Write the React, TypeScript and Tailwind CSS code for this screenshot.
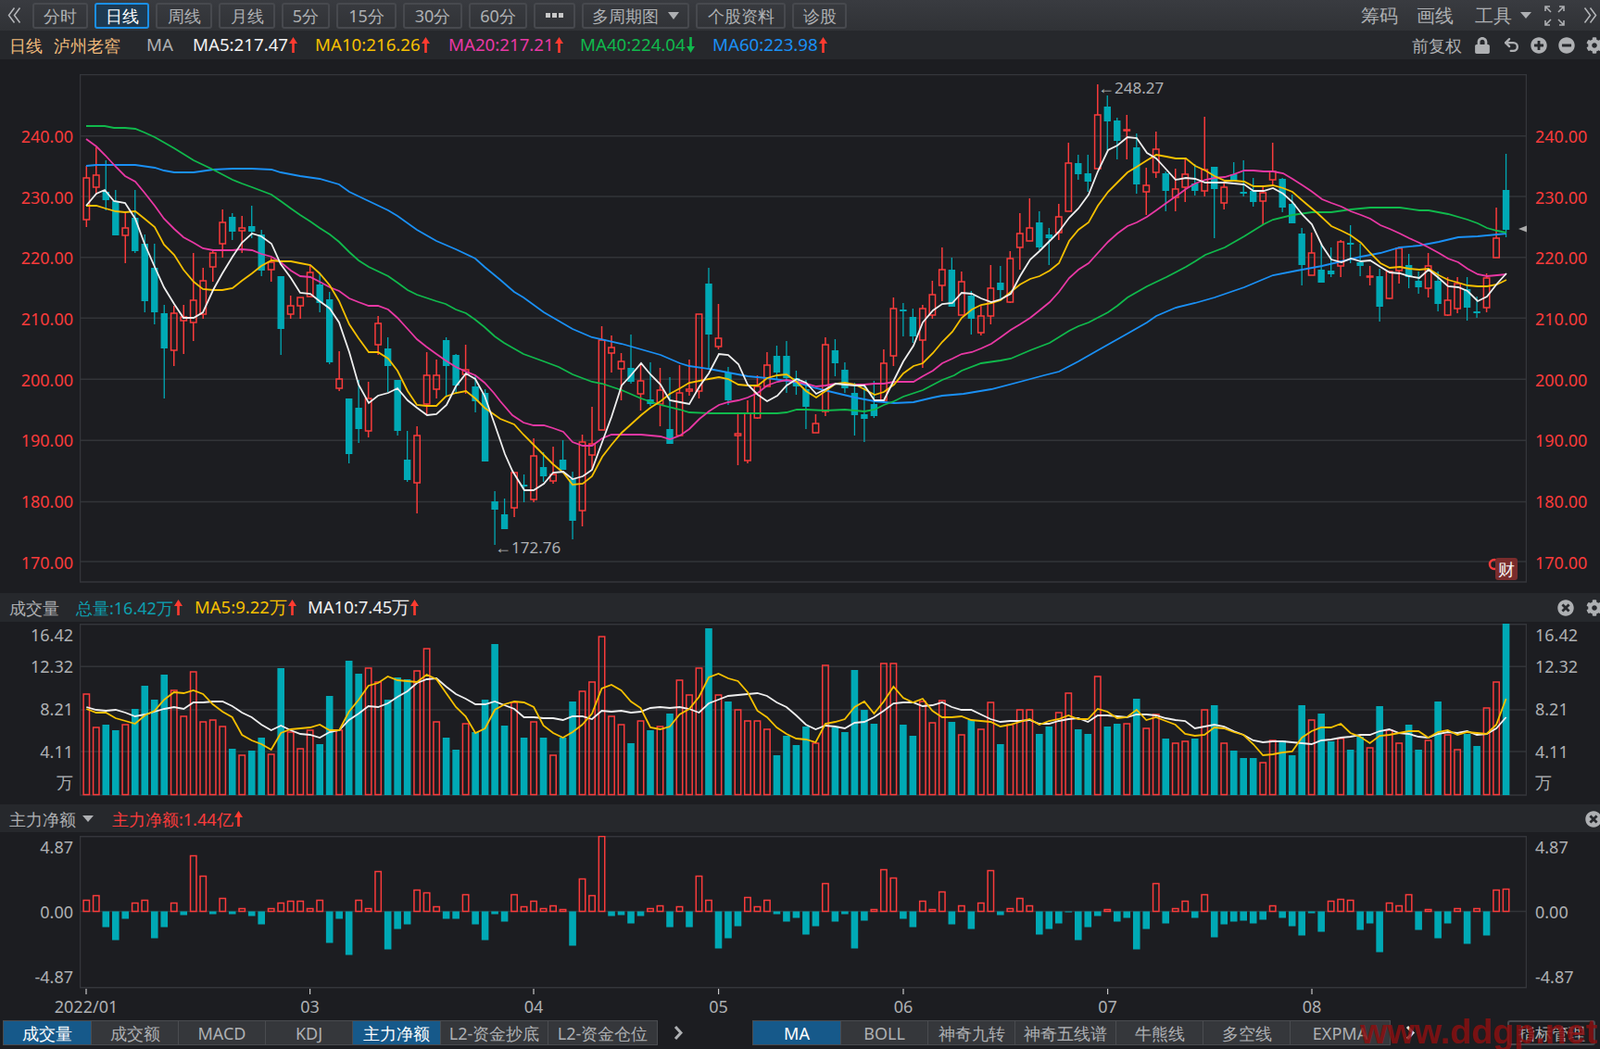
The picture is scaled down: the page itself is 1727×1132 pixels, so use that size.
import React from "react";
import { FaCog, FaLock, FaMinusCircle, FaPlusCircle, FaTimesCircle } from "react-icons/fa";
import { Undo2 } from "lucide-react";

const RED = "#f93b3b";
const TEAL = "#00a9b5";
const GRID = "#323438";
const STEP = 10.495;
const xAt = (i: number) => 93.3 + STEP * i;

// body top, body bottom, high, low, up
const candles: [number, number, number, number, number][] = [
  [192,237,179,245,1],[189,202,159,210,1],[207,216,173,227,0],[217,254,205,254,0],[246,254,230,284,1],
  [235,271,205,273,0],[263,325,253,337,0],[289,337,263,350,0],[338,376,329,430,0],[338,378,330,395,1],
  [342,346,329,382,1],[324,348,273,368,1],[303,339,289,344,1],[273,288,271,304,1],[240,263,226,278,1],
  [234,250,230,259,0],[246,249,233,273,1],[244,250,222,257,0],[253,292,248,298,0],[283,291,278,304,1],
  [298,355,298,383,0],[330,339,319,344,1],[321,330,321,344,1],[294,320,287,320,1],[307,327,295,337,0],
  [323,391,315,393,0],[409,419,379,422,1],[430,490,430,500,0],[440,463,410,478,0],[430,465,412,472,1],
  [349,372,341,383,1],[376,395,364,423,0],[410,465,410,470,0],[496,518,465,520,0],[470,521,460,554,1],
  [405,436,380,448,1],[405,420,388,430,1],[367,395,364,427,0],[383,416,382,425,0],[399,404,372,425,1],
  [417,433,405,445,0],[424,498,420,498,0],[541,550,530,588,0],[555,571,538,571,0],[510,548,510,558,1],
  [523,525,512,542,0],[492,539,473,542,1],[504,514,488,520,0],[512,519,482,522,1],[496,507,475,507,0],
  [517,562,509,582,0],[477,551,469,568,1],[479,491,439,507,1],[367,464,352,464,1],[375,381,362,402,1],
  [390,398,381,432,1],[397,412,361,414,0],[411,425,393,443,1],[431,436,391,438,0],[421,436,397,460,1],
  [463,479,407,479,0],[424,470,394,470,1],[420,422,388,427,1],[339,422,339,430,1],[306,361,289,398,0],
  [365,374,328,377,1],[402,432,396,437,0],[468,470,446,502,1],[446,497,432,500,1],[417,451,405,452,1],
  [394,417,380,417,1],[384,402,373,410,0],[384,408,368,424,0],[408,417,400,426,0],[420,439,410,463,0],
  [457,467,447,467,1],[372,444,364,449,1],[378,392,366,406,0],[399,419,391,424,0],[424,448,413,470,0],
  [447,452,417,477,0],[436,449,411,451,0],[392,432,377,435,1],[333,384,321,395,1],[334,336,327,363,0],
  [342,363,333,370,0],[333,367,329,397,1],[318,340,303,344,1],[291,308,267,325,1],[291,331,278,331,0],
  [304,340,293,340,1],[319,344,314,361,0],[341,359,330,362,1],[311,341,286,350,1],[305,313,287,322,0],
  [279,326,271,327,1],[252,267,230,291,1],[246,260,214,260,1],[240,267,228,270,0],[253,257,246,286,0],
  [234,251,220,259,1],[176,228,154,228,1],[176,188,167,194,0],[187,196,167,207,0],[124,182,91,182,1],
  [115,131,103,162,0],[130,152,127,172,0],[140,141,124,172,1],[159,199,144,209,0],[200,207,181,232,1],
  [161,186,142,192,1],[187,206,185,228,0],[204,213,182,228,1],[188,202,172,218,1],[198,206,177,211,0],
  [183,206,126,212,1],[180,204,180,257,0],[202,219,197,226,1],[188,195,175,195,0],[207,209,173,212,0],
  [206,218,192,223,0],[208,217,200,242,1],[185,194,154,200,1],[193,224,192,229,0],[220,241,210,241,0],
  [252,286,246,308,0],[273,297,251,297,1],[291,305,263,305,0],[292,296,267,299,0],[261,287,259,299,1],
  [262,264,243,284,0],[283,287,263,298,0],[298,299,287,308,1],[298,331,290,347,0],[293,322,292,323,1],
  [268,292,266,306,1],[286,299,274,311,0],[303,310,293,317,0],[287,311,273,321,1],[303,328,293,336,0],
  [324,340,299,341,1],[306,333,299,338,1],[312,332,299,346,0],[336,338,320,343,0],[300,332,295,337,1],
  [257,278,224,278,1],[205,248,166,256,0],
];

const ma5 = "93,222 104,209 113,205 123,217 135,219 146,236 156,263 167,288 177,310 188,328 198,343 209,343 219,337 230,313 240,295 251,277 261,262 272,252 282,255 293,263 303,285 314,300 324,316 335,317 345,325 356,333 366,348 377,380 387,415 398,435 408,427 419,424 429,419 440,432 450,440 461,448 471,447 482,437 492,417 503,403 513,409 523,427 534,458 545,490 553,508 566,529 576,529 587,522 597,510 608,509 618,517 629,514 639,507 650,477 660,450 671,416 681,405 692,392 702,404 713,415 723,432 734,434 744,436 755,417 765,403 776,382 786,383 797,393 807,415 818,426 828,433 839,427 849,416 860,409 870,413 881,425 891,420 902,414 912,415 923,416 933,416 944,432 954,432 965,410 975,390 986,373 996,348 1007,335 1017,328 1028,327 1038,316 1049,317 1059,322 1070,326 1080,323 1091,317 1101,298 1112,280 1122,271 1133,260 1143,250 1154,235 1164,225 1175,210 1185,185 1196,162 1206,157 1217,148 1227,149 1238,165 1248,171 1259,183 1269,194 1280,192 1290,193 1301,197 1311,197 1322,197 1332,198 1343,199 1353,206 1364,206 1374,203 1385,209 1395,218 1406,232 1416,242 1427,265 1437,280 1448,283 1458,279 1469,282 1479,281 1490,288 1500,294 1511,295 1521,298 1532,300 1542,291 1553,300 1563,309 1574,310 1584,314 1595,325 1605,320 1616,306 1626,295";
const ma10 = "93,222 104,222 114,225 125,228 135,229 146,228 156,236 167,245 177,264 188,275 198,291 209,304 219,312 230,313 240,313 251,311 261,303 272,295 282,287 293,281 303,282 314,282 324,284 335,286 345,295 356,308 366,325 377,350 387,365 398,380 408,380 419,387 429,400 440,422 450,437 460,438 471,438 481,428 492,424 503,422 513,430 523,440 540,452 555,458 565,469 576,480 587,491 597,501 608,510 618,523 629,522 639,514 650,493 660,480 671,467 681,458 692,448 702,440 713,433 723,425 734,419 744,413 755,411 765,409 776,407 786,409 797,415 807,416 818,416 828,408 839,405 849,404 860,412 870,422 881,429 891,422 902,414 912,413 923,415 933,420 944,426 954,423 965,415 975,403 986,395 996,392 1007,381 1017,369 1028,358 1038,343 1049,334 1059,329 1070,327 1080,324 1091,315 1101,307 1112,301 1122,298 1133,292 1143,284 1154,260 1164,248 1175,240 1185,222 1196,207 1206,197 1217,186 1227,180 1238,173 1248,167 1259,169 1269,171 1280,171 1290,179 1301,184 1311,190 1322,195 1332,195 1343,196 1353,201 1364,201 1374,200 1385,203 1395,207 1410,220 1422,230 1437,244 1448,249 1458,254 1469,262 1479,273 1490,284 1500,289 1511,288 1521,290 1532,291 1542,290 1553,297 1563,302 1574,305 1584,308 1595,309 1605,309 1616,307 1626,302";
const ma20 = "93,150 104,158 114,168 125,180 135,190 146,196 156,208 167,222 177,236 188,247 198,256 209,262 219,268 230,270 240,270 251,270 261,269 272,270 282,274 293,277 303,283 314,292 324,298 335,299 345,304 356,310 366,314 377,322 387,326 398,330 408,330 419,334 429,343 440,355 450,366 460,374 471,382 481,389 492,396 503,401 513,405 523,413 533,424 540,433 553,448 565,456 576,459 587,459 597,462 608,466 618,477 629,481 639,481 650,473 660,469 671,469 692,469 713,471 723,474 734,470 744,463 755,452 765,444 776,437 786,434 797,432 807,429 818,424 828,416 839,412 849,410 860,412 870,414 881,417 891,416 902,414 912,414 923,415 933,415 944,414 954,414 965,412 975,412 986,412 996,406 1007,400 1017,392 1028,387 1038,382 1049,380 1059,376 1070,371 1080,364 1091,356 1101,350 1112,343 1122,335 1133,326 1143,315 1154,300 1164,291 1175,284 1185,273 1196,261 1206,252 1217,244 1227,240 1238,234 1248,227 1259,219 1269,212 1280,204 1290,198 1301,194 1311,192 1322,191 1332,188 1343,184 1353,184 1364,185 1374,185 1385,187 1395,193 1406,200 1415,206 1427,215 1437,219 1448,223 1458,228 1469,232 1479,236 1490,243 1500,247 1511,252 1521,257 1532,262 1542,267 1553,273 1563,279 1574,283 1584,290 1595,296 1605,298 1616,297 1626,296";
const ma40 = "93,136 113,136 123,138 135,138 146,139 156,143 167,148 188,160 209,173 230,183 251,194 261,198 272,202 293,210 303,217 314,225 324,232 335,239 345,246 356,253 366,261 377,272 387,281 398,288 419,298 429,305 440,313 450,318 471,325 481,328 492,334 503,338 513,345 523,353 534,363 544,370 565,382 587,390 603,396 618,404 639,412 650,414 671,421 692,430 713,437 734,442 744,445 765,446 786,446 807,446 828,446 839,446 849,445 860,442 870,442 891,443 912,442 933,444 944,442 954,437 965,433 975,428 996,421 1017,410 1030,405 1038,400 1059,392 1080,389 1091,387 1112,378 1133,370 1154,357 1164,352 1175,348 1196,337 1206,330 1217,321 1238,309 1259,299 1280,288 1290,282 1301,275 1322,267 1343,255 1364,242 1374,237 1395,232 1416,229 1437,229 1458,226 1479,224 1511,224 1532,227 1542,227 1563,231 1584,237 1595,241 1605,246 1616,249 1626,251";
const ma60 = "93,179 104,178 125,178 146,178 167,181 177,184 188,186 209,186 230,183 251,182 272,182 293,183 303,186 324,190 345,193 366,199 377,207 398,217 419,227 429,233 450,248 471,260 492,269 513,279 523,288 540,302 555,315 565,321 587,337 618,355 639,364 671,371 692,377 713,383 734,392 744,395 765,398 786,402 807,406 828,408 849,411 860,413 881,419 902,424 923,429 944,433 965,435 986,434 1007,429 1017,427 1040,425 1070,420 1101,412 1127,405 1143,401 1164,390 1185,378 1217,360 1238,348 1248,341 1269,332 1290,327 1311,321 1343,310 1374,297 1400,292 1427,287 1448,282 1469,277 1490,273 1511,267 1532,265 1553,261 1574,256 1595,255 1616,253 1626,252";

const volTops = [
  749,785,782,788,782,765,740,755,728,745,773,725,779,777,784,808,815,810,796,814,721,790,808,788,803,751,788,713,727,721,
  736,755,731,733,724,700,779,796,809,781,790,755,695,783,758,796,779,796,815,796,757,746,736,687,773,782,802,778,788,784,
  770,734,750,721,678,750,757,766,778,778,787,815,794,804,784,802,718,785,790,723,766,781,716,716,782,794,757,780,756,779,
  793,777,787,758,803,782,766,766,792,784,769,748,787,792,730,784,781,781,754,786,771,797,802,800,797,766,761,802,810,818,
  818,823,799,799,815,761,777,770,800,797,809,795,807,762,788,802,782,809,799,757,793,809,792,805,764,736,673,
];
const volMa5 = [
  765,769,769,775,778,781,772,767,755,747,748,745,749,760,768,774,793,799,803,809,791,787,786,785,782,788,788,768,755,740,
  737,730,734,735,736,728,733,748,763,773,791,786,766,760,757,758,763,783,791,796,790,782,770,743,739,745,757,764,785,787,
  784,771,765,752,731,727,732,735,747,767,774,785,792,797,798,801,781,779,776,763,757,770,757,741,753,758,754,767,774,774,
  773,777,778,779,784,782,779,776,782,778,776,772,776,776,765,768,775,774,766,777,774,778,782,792,794,793,785,786,790,793,
  803,815,814,812,811,796,789,785,785,781,791,795,802,794,793,791,789,789,796,790,788,793,790,791,792,782,754,
];
const volMa10 = [
  763,766,767,766,769,773,771,768,765,763,765,758,758,757,757,762,769,774,782,788,783,788,792,793,796,790,788,777,770,762,
  763,759,752,746,737,733,732,741,749,754,760,760,757,761,765,774,774,775,775,777,773,773,776,767,768,767,769,768,764,763,
  764,763,765,769,759,755,751,750,749,748,751,758,763,772,782,787,783,784,786,780,779,774,767,759,758,758,762,761,758,763,
  766,766,771,776,779,778,778,777,781,781,778,776,775,779,772,772,773,774,771,771,772,775,777,778,786,784,782,784,789,793,
  799,801,800,800,801,802,803,799,798,796,795,793,793,789,787,791,792,795,796,792,790,791,789,793,792,786,774,
];
const netBars = [
  12,17,-17,-31,-8,9,12,-29,-17,9,-4,60,38,-3,14,-3,3,-5,-14,3,9,11,11,3,12,-34,-8,-47,12,3,
  43,-41,-19,-14,23,20,5,-8,-8,18,-14,-31,-3,-11,18,5,11,3,6,2,-37,35,17,81,-5,-4,-13,-5,3,6,
  -17,5,-17,38,12,-40,-29,-16,15,5,12,-3,-11,-7,-25,-16,30,-11,-3,-40,-10,2,45,36,-8,-17,11,2,21,-14,
  6,-19,9,44,-4,3,14,6,-25,-19,-13,-1,-31,-17,-5,2,-11,-7,-41,-19,30,-13,3,11,-7,18,-28,-14,-11,-10,
  -13,-9,6,-7,-16,-26,-2,-22,11,13,12,-20,-13,-44,9,6,18,-20,2,-29,-13,3,-35,3,-26,23,24,
];

const priceLabels = ["240.00", "230.00", "220.00", "210.00", "200.00", "190.00", "180.00", "170.00"];
const priceLines = [146.7, 212, 277.7, 343.3, 409.3, 475.3, 541.5, 606];
const periods: [string, string, boolean?][] = [
  ["分时", "w-[60px]"], ["日线", "w-[59px]", true], ["周线", "w-[61px]"], ["月线", "w-[61px]"],
  ["5分", "w-[52px]"], ["15分", "w-[65px]"], ["30分", "w-[64px]"], ["60分", "w-[63px]"],
];
const leftTabs: [string, string, boolean?][] = [
  ["成交量", "w-[94px]", true], ["成交额", "w-[93px]"], ["MACD", "w-[93px]"], ["KDJ", "w-[93px]"],
  ["主力净额", "w-[94px]", true], ["L2-资金抄底", "w-[115px]"], ["L2-资金仓位", "w-[117px]"],
];
const rightTabs: [string, string, boolean?][] = [
  ["MA", "w-[94px]", true], ["BOLL", "w-[93px]"], ["神奇九转", "w-[93px]"], ["神奇五线谱", "w-[108px]"],
  ["牛熊线", "w-[93px]"], ["多空线", "w-[93px]"], ["EXPMA", "w-[107px]"],
];

function Arrow({ down, color }: { down?: boolean; color: string }) {
  return (
    <svg width="9" height="17" viewBox="0 0 9 17" className={down ? "ml-[1px] rotate-180" : "ml-[1px]"}>
      <path d="M4.5 0 9 7H5.8V17H3.2V7H0Z" fill={color} />
    </svg>
  );
}

function Legend({ text, className, down, arrowColor = "#ff3b30" }: { text: string; className: string; down?: boolean; arrowColor?: string }) {
  return (
    <span className={`flex items-center ${className}`}>
      {text}
      <Arrow down={down} color={arrowColor} />
    </span>
  );
}

function DoubleChevron({ right }: { right?: boolean }) {
  return (
    <svg width="15" height="17" viewBox="0 0 15 17" fill="none" stroke="#b4b6b9" strokeWidth="1.5" className={right ? "rotate-180" : ""}>
      <path d="M7.5.5 1.5 8.500 7.500 16.500M13.500.5 7.500 8.500 13.500 16.500" />
    </svg>
  );
}

function TabChevron({ color }: { color: string }) {
  return (
    <svg width="10" height="15" viewBox="0 0 10 15" fill="none" stroke={color} strokeWidth="3">
      <path d="M2 1 8 7.500 2 14" />
    </svg>
  );
}

function Frame({ x, y, w, h }: { x: number; y: number; w: number; h: number }) {
  return <rect x={x} y={y} width={w} height={h} fill="none" stroke="#34363b" strokeWidth="1.5" />;
}

function Candle({ i }: { i: number }) {
  const [top, bottom, high, low, up] = candles[i];
  const x = xAt(i);
  if (up) {
    return (
      <g stroke={RED} strokeWidth="1.5" fill="none">
        <path d={`M${x} ${high}V${top}M${x} ${bottom}V${low}`} />
        <rect x={x - 3.2} y={top} width={6.4} height={bottom - top} />
      </g>
    );
  }
  return (
    <g>
      <path d={`M${x} ${high}V${low}`} stroke={TEAL} strokeWidth="1.3" />
      <rect x={x - 3.7} y={top} width={7.4} height={bottom - top} fill={TEAL} />
    </g>
  );
}

function PriceChart() {
  return (
    <svg width="1562" height="549" viewBox="86 80 1562 549" className="block">
      {priceLines.map((y) => (
        <path key={y} d={`M86 ${y}H1648`} stroke={GRID} strokeWidth="1.6" />
      ))}
      <Frame x={86.5} y={80.5} w={1561} h={547.5} />
      {candles.map((_, i) => (
        <Candle key={i} i={i} />
      ))}
      <polyline points={ma60} fill="none" stroke="#1a90f5" strokeWidth="1.8" />
      <polyline points={ma40} fill="none" stroke="#10b94c" strokeWidth="1.8" />
      <polyline points={ma20} fill="none" stroke="#e838a4" strokeWidth="1.8" />
      <polyline points={ma10} fill="none" stroke="#f6c000" strokeWidth="1.8" />
      <polyline points={ma5} fill="none" stroke="#eeeeee" strokeWidth="1.8" />
      <text x="1185" y="101" fill="#aeb0b3" fontSize="17"><tspan fontSize="18">←</tspan>248.27</text>
      <text x="534" y="597" fill="#aeb0b3" fontSize="17"><tspan fontSize="18">←</tspan>172.76</text>
      <polygon points="1639,247 1648,243.500 1648,250.500" fill="#a8a8a8" />
      <circle cx="1613" cy="609" r="5" fill="none" stroke={RED} strokeWidth="2.500" />
    </svg>
  );
}

function VolumeChart() {
  const toPoints = (ys: number[]) => ys.map((y, i) => `${xAt(i).toFixed(1)},${y}`).join(" ");
  return (
    <svg width="1562" height="186" viewBox="86 673 1562 186" className="mt-[2px] block">
      {[719.3, 766, 811].map((y) => (
        <path key={y} d={`M86 ${y}H1648`} stroke={GRID} strokeWidth="1.6" />
      ))}
      <Frame x={86.5} y={673.7} w={1561} h={184.3} />
      {volTops.map((top, i) =>
        candles[i][4] ? (
          <rect key={i} x={xAt(i) - 3.2} y={top} width={6.4} height={857.5 - top} fill="none" stroke={RED} strokeWidth="1.5" />
        ) : (
          <rect key={i} x={xAt(i) - 3.8} y={top} width={7.6} height={858 - top} fill={TEAL} />
        ),
      )}
      <polyline points={toPoints(volMa10)} fill="none" stroke="#eeeeee" strokeWidth="1.8" />
      <polyline points={toPoints(volMa5)} fill="none" stroke="#f6c000" strokeWidth="1.8" />
    </svg>
  );
}

function NetChart() {
  return (
    <svg width="1562" height="165" viewBox="86 902 1562 165" className="mt-[4px] block">
      <path d="M86 983.5H1648" stroke={GRID} strokeWidth="1.6" />
      <Frame x={86.5} y={902.7} w={1561} h={163} />
      {netBars.map((v, i) =>
        v > 0 ? (
          <rect key={i} x={xAt(i) - 3.2} y={983.5 - v} width={6.4} height={v} fill="none" stroke={RED} strokeWidth="1.5" />
        ) : (
          <rect key={i} x={xAt(i) - 3.8} y={983.5} width={7.6} height={-v} fill={TEAL} />
        ),
      )}
    </svg>
  );
}

function DateAxis() {
  const dates: [number, string][] = [[93, "2022/01"], [334.6, "03"], [576, "04"], [775.6, "05"], [975, "06"], [1195.6, "07"], [1416, "08"]];
  return (
    <svg width="1727" height="34" viewBox="0 1067 1727 34" className="block">
      {dates.map(([x, label]) => (
        <g key={label}>
          <path d={`M${x} 1066V1073`} stroke="#c8c8c8" strokeWidth="1.2" />
          <text x={x} y="1093" textAnchor="middle" fill="#aeb0b3" fontSize="18">{label}</text>
        </g>
      ))}
    </svg>
  );
}

function TabGroup({ tabs }: { tabs: [string, string, boolean?][] }) {
  return (
    <div className="flex h-[27px] gap-px border border-[#4a4c50] bg-[#4a4c50]">
      {tabs.map(([label, width, active]) => (
        <div
          key={label}
          className={`flex items-center justify-center ${width} ${active ? "bg-[#16598a] text-white" : "bg-[#35373b] text-[#aeb0b3]"}`}
        >
          {label}
        </div>
      ))}
    </div>
  );
}

function ToolButton({ children, className }: { children: React.ReactNode; className: string }) {
  return (
    <div className={`flex h-[28px] items-center justify-center rounded-[3px] border-2 border-[#47494e] text-[#aeb0b3] ${className}`}>
      {children}
    </div>
  );
}

function VolumeScale() {
  return (
    <>
      <span className="flex h-[26px] items-center">16.42</span>
      <span className="flex h-[41px] items-center">12.32</span>
      <span className="flex h-[52px] items-center">8.21</span>
      <span className="flex h-[39px] items-center">4.11</span>
      <span className="flex h-[27px] items-center">万</span>
    </>
  );
}

function NetScale() {
  return (
    <>
      <span className="flex h-[22px] items-center">4.87</span>
      <span className="mt-[48px] flex h-[22px] items-center">0.00</span>
      <span className="mt-[48px] flex h-[22px] items-center">-4.87</span>
    </>
  );
}

export default function App() {
  return (
    <div className="relative h-[1132px] w-[1727px] overflow-hidden bg-[#1c1d21] text-[18px] leading-none text-[#aeb0b3] [font-family:'Noto_Sans','Noto_Sans_CJK_SC',sans-serif]">
      {/* period toolbar */}
      <div className="flex h-[33px] items-center bg-gradient-to-b from-[#393b40] to-[#303236] pl-[8px]">
        <div className="w-[27px]">
          <DoubleChevron />
        </div>
        <div className="flex gap-[7px]">
          {periods.map(([label, width, active]) =>
            active ? (
              <div key={label} className={`flex h-[28px] items-center justify-center rounded-[3px] border-2 border-[#1b8fe6] bg-[#1d3a52] text-white ${width}`}>
                {label}
              </div>
            ) : (
              <ToolButton key={label} className={width}>{label}</ToolButton>
            ),
          )}
          <ToolButton className="w-[45px] gap-[2px]">
            <i className="h-[5px] w-[5px] bg-[#c8c8c8]" />
            <i className="h-[5px] w-[5px] bg-[#c8c8c8]" />
            <i className="h-[5px] w-[5px] bg-[#c8c8c8]" />
          </ToolButton>
          <ToolButton className="w-[116px] gap-[10px]">
            多周期图
            <i className="h-0 w-0 border-x-[6px] border-t-[8px] border-x-transparent border-t-[#aeb0b3]" />
          </ToolButton>
          <ToolButton className="w-[97px]">个股资料</ToolButton>
          <ToolButton className="w-[59px]">诊股</ToolButton>
        </div>
        <div className="ml-auto flex items-center pr-[3px] text-[20px]">
          <span className="mr-[20px]">筹码</span>
          <span className="mr-[23px]">画线</span>
          <span className="mr-[9px]">工具</span>
          <i className="mr-[14px] h-0 w-0 border-x-[6px] border-t-[7px] border-x-transparent border-t-[#aeb0b3]" />
          <svg width="22" height="22" viewBox="0 0 22 22" className="mr-[20px]" fill="none" stroke="#aeb0b3" strokeWidth="1.6">
            <path d="M1 6V1H6M1 1 7 7M16 1H21V6M21 1 15 7M1 16V21H6M1 21 7 15M16 21H21V16M21 21 15 15" />
          </svg>
          <DoubleChevron right />
        </div>
      </div>

      {/* moving average legend */}
      <div className="flex h-[31px] items-center bg-[#26282c] pl-[10px]">
        <span className="w-[48px] text-[#f1bb7b]">日线</span>
        <span className="w-[100px] text-[#f1bb7b]">泸州老窖</span>
        <span className="w-[50px] text-[18.7px]">MA</span>
        <Legend text="MA5:217.47" className="w-[132px] text-[18.7px] text-[#f2f2f2]" />
        <Legend text="MA10:216.26" className="w-[144px] text-[18.7px] text-[#f6c000]" />
        <Legend text="MA20:217.21" className="w-[142px] text-[18.7px] text-[#e838a4]" />
        <Legend text="MA40:224.04" className="w-[143px] text-[18.7px] text-[#10b94c]" down arrowColor="#10b94c" />
        <Legend text="MA60:223.98" className="text-[18.7px] text-[#1a90f5]" />
        <div className="ml-auto flex items-center">
          <span className="mr-[13px]">前复权</span>
          <FaLock size={18} className="mr-[13px]" />
          <Undo2 size={19} strokeWidth={3} className="mr-[11px]" />
          <FaPlusCircle size={18} className="mr-[12px]" />
          <FaMinusCircle size={18} className="mr-[12px]" />
          <FaCog size={18} className="mr-[-3px]" />
        </div>
      </div>

      {/* price panel */}
      <div className="relative flex h-[576px]">
        <div className="flex w-[86px] flex-col items-end pt-[50px] pr-[7px] text-[#f93b3b]">
          {priceLabels.map((p) => (
            <span key={p} className="flex h-[65.7px] items-center">{p}</span>
          ))}
        </div>
        <div className="mt-[16px]">
          <PriceChart />
        </div>
        <div className="flex flex-col pt-[50px] pl-[9px] text-[#f93b3b]">
          {priceLabels.map((p) => (
            <span key={p} className="flex h-[65.7px] items-center">{p}</span>
          ))}
        </div>
        <div className="absolute top-[538px] left-[1614px] flex h-[24px] w-[24px] items-center justify-center rounded-[3px] bg-[#7a2c2c] text-[#f5f5f5]">财</div>
      </div>

      {/* volume panel */}
      <div className="flex h-[31px] items-center bg-[#26282c] pl-[10px]">
        <span className="w-[72px]">成交量</span>
        <Legend text="总量:16.42万" className="w-[128px] text-[#0d9fae]" />
        <Legend text="MA5:9.22万" className="w-[122px] text-[18.5px] text-[#f6c000]" />
        <Legend text="MA10:7.45万" className="text-[18.5px] text-[#f2f2f2]" />
        <div className="ml-auto flex items-center gap-[13px]">
          <FaTimesCircle size={18} />
          <FaCog size={18} className="mr-[-3px]" />
        </div>
      </div>
      <div className="flex h-[197px]">
        <div className="flex w-[86px] flex-col items-end pt-[1px] pr-[7px]">
          <VolumeScale />
        </div>
        <VolumeChart />
        <div className="flex flex-col pt-[1px] pl-[9px]">
          <VolumeScale />
        </div>
      </div>

      {/* net inflow panel */}
      <div className="flex h-[30px] items-center bg-[#26282c] pt-[1px] pl-[10px]">
        <span className="w-[79px]">主力净额</span>
        <i className="mr-[20px] h-0 w-0 border-x-[6px] border-t-[7px] border-x-transparent border-t-[#aeb0b3]" />
        <Legend text="主力净额:1.44亿" className="text-[#f93b3b]" />
        <div className="ml-auto flex items-center">
          <FaTimesCircle size={18} className="mr-[-2px]" />
        </div>
      </div>
      <div className="flex h-[169px]">
        <div className="flex w-[86px] flex-col items-end pt-[5px] pr-[7px]">
          <NetScale />
        </div>
        <NetChart />
        <div className="flex flex-col pt-[5px] pl-[9px]">
          <NetScale />
        </div>
      </div>

      <DateAxis />

      {/* indicator tabs */}
      <div className="flex h-[31px] items-start pl-[3px]">
        <TabGroup tabs={leftTabs} />
        <div className="flex h-[27px] w-[102px] items-center pl-[17px]">
          <TabChevron color="#aeb0b3" />
        </div>
        <TabGroup tabs={rightTabs} />
        <div className="flex h-[27px] w-[126px] items-center pl-[16px]">
          <TabChevron color="#e8e8e8" />
        </div>
        <div className="flex h-[27px] w-[95px] items-center justify-center rounded-[3px] border-2 border-[#47494e]">指标管理</div>
      </div>

      {/* site watermark */}
      <svg width="259" height="36" viewBox="0 0 259 36" className="absolute top-[1096px] left-[1468px]">
        <text x="0" y="30" fontSize="36" fontWeight="700" fontFamily="Liberation Sans, sans-serif" fill="#8a0f10" fillOpacity="0.85" textLength="256" lengthAdjust="spacingAndGlyphs">
          www.ddgp.net
        </text>
      </svg>
    </div>
  );
}
